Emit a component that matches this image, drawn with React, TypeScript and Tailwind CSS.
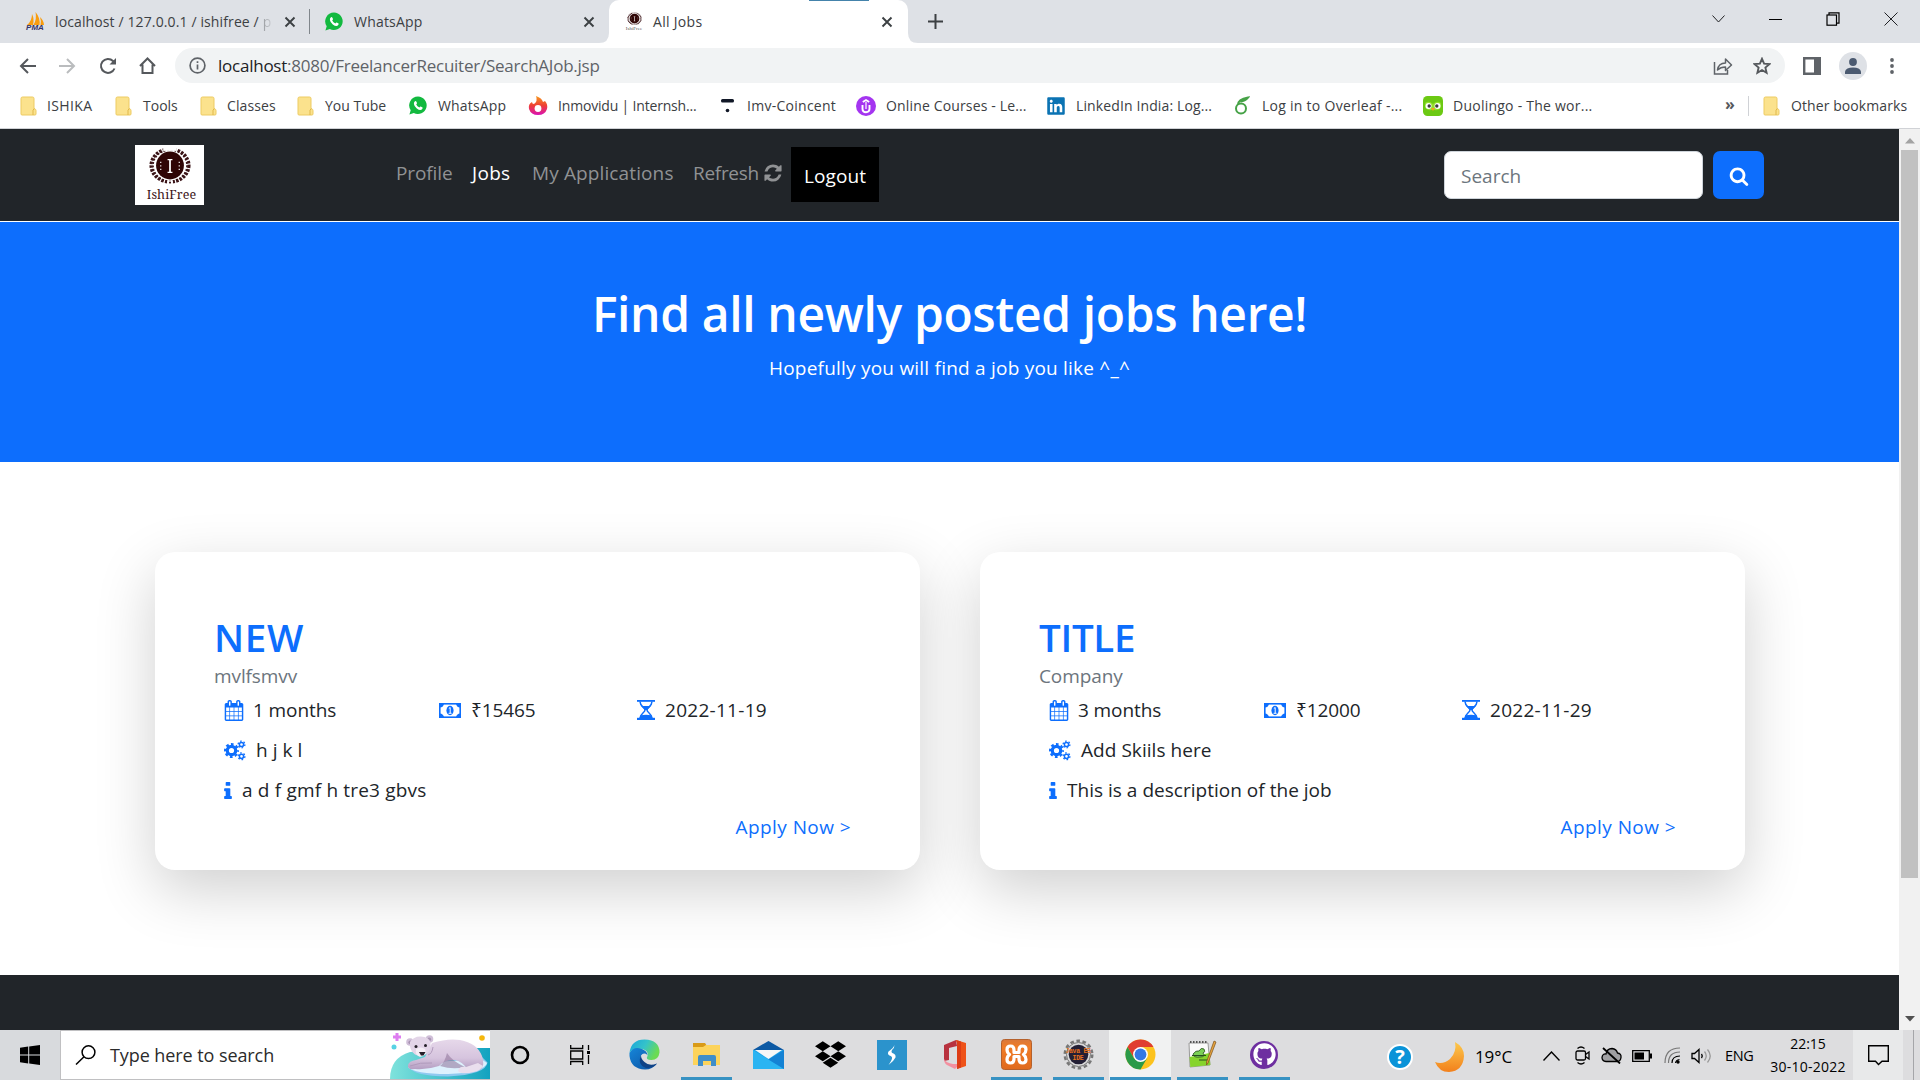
import React from "react";
import { FaWhatsapp, FaLinkedin, FaDropbox, FaGithub } from "react-icons/fa";

const CALENDAR =
  "M192 1664h288v-288h-288v288zm352 0h320v-288h-320v288zm-352-352h288v-320h-288v320zm352 0h320v-320h-320v320zm-352-384h288v-288h-288v288zm736 736h320v-288h-320v288zm-384-736h320v-288h-320v288zm768 736h288v-288h-288v288zm-384-352h320v-320h-320v320zm-352-864v-288q0-13-9.5-22.5t-22.5-9.5h-64q-13 0-22.5 9.5t-9.5 22.5v288q0 13 9.5 22.5t22.5 9.5h64q13 0 22.5-9.5t9.5-22.5zm736 864h288v-320h-288v320zm-384-384h320v-288h-320v288zm384 0h288v-288h-288v288zm32-480v-288q0-13-9.5-22.5t-22.5-9.5h-64q-13 0-22.5 9.5t-9.5 22.5v288q0 13 9.5 22.5t22.5 9.5h64q13 0 22.5-9.5t9.5-22.5zm384-64v1280q0 52-38 90t-90 38h-1408q-52 0-90-38t-38-90v-1280q0-52 38-90t90-38h128v-96q0-66 47-113t113-47h64q66 0 113 47t47 113v96h384v-96q0-66 47-113t113-47h64q66 0 113 47t47 113v96h128q52 0 90 38t38 90z";
const REFRESH =
  "M1639 1056q0 5-1 7-64 268-268 434.5t-478 166.5q-146 0-282.5-55t-243.5-157l-129 129q-19 19-45 19t-45-19-19-45v-448q0-26 19-45t45-19h448q26 0 45 19t19 45-19 45l-137 137q71 66 161 102t187 36q134 0 250-65t186-179q11-17 53-117 8-23 30-23h192q13 0 22.5 9.5t9.5 22.5zm25-800v448q0 26-19 45t-45 19h-448q-26 0-45-19t-19-45 19-45l138-138q-148-137-349-137-134 0-250 65t-186 179q-11 17-53 117-8 23-30 23h-199q-13 0-22.5-9.5t-9.5-22.5v-7q65-268 270-434.5t480-166.5q146 0 284 55.5t245 156.5l130-129q19-19 45-19t45 19 19 45z";
const SEARCH =
  "M1216 832q0-185-131.5-316.5t-316.5-131.5-316.5 131.5-131.5 316.5 131.5 316.5 316.5 131.5 316.5-131.5 131.5-316.5zm512 832q0 52-38 90t-90 38q-54 0-90-38l-343-342q-179 124-399 124-143 0-273.5-55.5t-225-150-150-225-55.5-273.5 55.5-273.5 150-225 225-150 273.5-55.5 273.5 55.5 225 150 150 225 55.5 273.5q0 220-124 399l343 343q37 37 37 90z";
const INFO =
  "M1216 1344v128q0 26-19 45t-45 19h-512q-26 0-45-19t-19-45v-128q0-26 19-45t45-19h64v-384h-64q-26 0-45-19t-19-45v-128q0-26 19-45t45-19h384q26 0 45 19t19 45v576h64q26 0 45 19t19 45zm-128-1152v192q0 26-19 45t-45 19h-256q-26 0-45-19t-19-45v-192q0-26 19-45t45-19h256q26 0 45 19t19 45z";

const Folder = () => (
  <svg width="17" height="20" viewBox="0 0 17 20">
    <path d="M1 2.5Q1 1 2.5 1h10Q14 1 14 2.5V13h.6q1.4 0 1.4 1.5V18q0 1-1 1H2q-1 0-1-1z" fill="#fbe28d" stroke="#edcb62" strokeWidth="1" />
    <path d="M13 19v-5l1.5-1.5" stroke="#e0b84a" fill="none" />
  </svg>
);

const WhatsAppIcon = () => (
  <svg width="18" height="19" viewBox="0 0 18 19">
    <path d="M9 .5a8.800 8.800 0 1 1-4.200 16.600L.4 18.500l1.300-4.300A8.800 8.800 0 0 1 9 .5z" fill="#12b93f" />
    <path d="M6 5.200q.8-.6 1.300.3l.7 1.600q0 .6-.8 1.300 1 2 3.200 3 .8-1 1.300-.8l1.900 1q.3 1.400-1.200 2.200-2 .6-4.600-1.400T4.900 8q-.1-2 1.100-2.800z" fill="#fff" />
  </svg>
);

const Crest = ({ w, h }: { w: number; h: number }) => (
  <svg width={w} height={h} viewBox="0 0 44 38">
    <ellipse cx="22" cy="18" rx="19.500" ry="17" fill="none" stroke="#3b1417" strokeWidth="3.200" strokeDasharray="2.600 1.300" />
    <ellipse cx="22" cy="18" rx="17.500" ry="16" fill="none" stroke="#3b1417" strokeWidth="1.800" strokeDasharray="2 1.600" />
    <rect x="15" y="0" width="14" height="3" fill="#fff" />
    <rect x="19" y="33.200" width="6" height="4.800" fill="#fff" />
    <circle cx="22" cy="35.500" r="1.100" fill="#3b1417" />
    <ellipse cx="22" cy="18" rx="15" ry="14.800" fill="#fff" />
    <ellipse cx="22" cy="18" rx="14.300" ry="14.300" fill="#2f0505" />
    <path d="M19.500 12h5M19.500 25h5" stroke="#fff" strokeWidth="1.200" />
    <path d="M22 12v13" stroke="#fff" strokeWidth="1.800" />
    <path d="M12.500 14v9M31.500 14v9" stroke="#fff" strokeWidth="1.200" strokeDasharray="1.300 2.400" />
  </svg>
);

const TabClose = () => (
  <svg width="12" height="12" viewBox="0 0 12 12" stroke="#3c4043" strokeWidth="1.9">
    <path d="M1.5 1.5l9 9M10.5 1.5l-9 9" />
  </svg>
);

function TabStrip() {
  return (
    <div className="flex h-[43px] bg-[#dee1e6] text-[14px] text-[#3c4043]">
      <div className="flex w-[309px] items-center pl-[25px]">
        <div className="flex w-[20px] flex-col items-center">
          <svg width="17" height="13" viewBox="0 0 17 13" fill="#f89c0e">
            <path d="M0 13Q5 9 5 2q2.500 5 1 11zM6.500 13Q10 7 8.500 0q5 6 4 13zM13.500 13q1-4-.5-8 3.500 3 4 8z" />
          </svg>
          <span className="font-['Liberation_Sans'] text-[8px] font-bold italic leading-[6px] text-[#333366]">PMA</span>
        </div>
        <span className="ml-[10px] w-[219px] whitespace-nowrap tracking-[0.12px]">
          localhost / 127.0.0.1 / ishifree / <span className="bg-gradient-to-r from-[#9a9da1] to-[#c8cbd0] bg-clip-text text-transparent">p</span>
        </span>
        <span className="ml-[10px]"><TabClose /></span>
      </div>
      <div className="flex w-[300px] items-center">
        <div className="h-[25px] w-px bg-[#80868b]" />
        <span className="ml-[15px]"><WhatsAppIcon /></span>
        <span className="ml-[11px] w-[229px] tracking-[0.2px]">WhatsApp</span>
        <TabClose />
      </div>
      <div className="relative flex w-[299px] items-center rounded-t-[10px] bg-white pl-[17px]">
        <div className="absolute left-[200px] top-0 h-px w-[60px] bg-[#4483ab]" />
        <svg className="absolute -left-[10px] bottom-0" width="10" height="10" viewBox="0 0 10 10"><path d="M10 0v10H0Q10 10 10 0z" fill="#fff" /></svg>
        <svg className="absolute -right-[10px] bottom-0" width="10" height="10" viewBox="0 0 10 10"><path d="M0 0v10h10Q0 10 0 0z" fill="#fff" /></svg>
        <div className="flex w-[16px] flex-col items-center">
          <Crest w={15} h={14} />
          <span className="font-['Liberation_Serif'] text-[5px] leading-[6px] text-[#555]">IshiFree</span>
        </div>
        <span className="ml-[11px] w-[228px] tracking-[0.3px]">All Jobs</span>
        <TabClose />
      </div>
      <div className="flex flex-1 items-center pl-[20px]">
        <svg width="15" height="15" viewBox="0 0 15 15" stroke="#3c4043" strokeWidth="2"><path d="M7.500 0v15M0 7.500h15" /></svg>
      </div>
      <div className="flex h-[38px] w-[230px] items-center gap-[44px]">
        <svg className="ml-[22px]" width="13" height="8" viewBox="0 0 13 8" fill="none" stroke="#202124"><path d="M.5.5l6 6.500 6-6.500" /></svg>
        <svg width="13" height="1" viewBox="0 0 13 1"><path d="M0 .5h13" stroke="#000" /></svg>
        <svg width="14" height="14" viewBox="0 0 14 14" fill="none" stroke="#000" strokeWidth="1.200"><rect x="1" y="3" width="9.500" height="10.200" /><path d="M3 3V.8h10v10.400h-2.500" /></svg>
        <svg width="14" height="14" viewBox="0 0 14 14" stroke="#202124"><path d="M.5.5l13 13M13.500.5l-13 13" /></svg>
      </div>
    </div>
  );
}

function Toolbar() {
  return (
    <div className="flex h-[45px] items-center bg-white">
      <div className="flex w-[175px] items-center gap-[23px] pl-[19px]">
        <svg width="17" height="16" viewBox="0 0 17 16" fill="none" stroke="#55585c" strokeWidth="2"><path d="M17 8H2M9 1L2 8l7 7" /></svg>
        <svg width="17" height="16" viewBox="0 0 17 16" fill="none" stroke="#babcbe" strokeWidth="2"><path d="M0 8h15M8 1l7 7-7 7" /></svg>
        <svg width="18" height="18" viewBox="0 0 18 18" fill="none" stroke="#55585c" strokeWidth="2"><path d="M15.500 11.500A7 7 0 1 1 14 4l1.500 1.500" /><path d="M17 1v6.500h-6.500z" fill="#55585c" stroke="none" /></svg>
        <svg className="-ml-px" width="17" height="18" viewBox="0 0 17 18" fill="none" stroke="#55585c" strokeWidth="2"><path d="M1 9l7.500-7.500L16 9M3.500 7.500V16h10V7.500" /></svg>
      </div>
      <div className="flex h-[35px] w-[1610px] items-center rounded-full bg-[#f1f3f4] pl-[14px]">
        <svg width="17" height="17" viewBox="0 0 17 17" fill="none" stroke="#5f6368" strokeWidth="1.700"><circle cx="8.500" cy="8.500" r="7.400" /><path d="M8.500 7.500v5M8.500 4.200v1.800" /></svg>
        <span className="ml-[12px] flex-1 whitespace-nowrap text-[17px] tracking-[-0.24px] text-[#5f6368]">
          <span className="text-[#202124]">localhost</span>:8080/FreelancerRecuiter/SearchAJob.jsp
        </span>
        <svg className="mr-[20px]" width="20" height="18" viewBox="0 0 20 18" fill="none" stroke="#5f6368" strokeWidth="1.500"><path d="M1.500 5v12h13v-4" /><path d="M4.500 13q1-7 8-7V2l6 6-6 5.500V10q-5 0-8 3z" strokeLinejoin="round" /></svg>
        <svg className="mr-[14px]" width="18" height="18" viewBox="0 0 18 18" fill="none" stroke="#55585c" strokeWidth="1.900"><path d="M9 1.800l2.100 4.900 5.300.4-4 3.500 1.200 5.200L9 13l-4.600 2.800 1.200-5.200-4-3.500 5.300-.4z" /></svg>
      </div>
      <div className="flex flex-1 items-center pl-[18px]">
        <svg width="18" height="18" viewBox="0 0 18 18"><path d="M1.200 1.200h15.600v15.600H1.200z" fill="#fff" stroke="#5f6368" strokeWidth="2.400" /><path d="M11 0h7v18h-7z" fill="#5f6368" /></svg>
        <div className="ml-[18px] flex size-[28px] items-center justify-center rounded-full bg-[#dee1e6]">
          <svg width="16" height="16" viewBox="0 0 16 16" fill="#4b5a70"><circle cx="8" cy="4" r="3.900" /><path d="M0 16v-2.500Q1 9.500 8 9.500t8 4V16z" /></svg>
        </div>
        <svg className="ml-[23px]" width="4" height="16" viewBox="0 0 4 16" fill="#5f6368"><circle cx="2" cy="2" r="1.900" /><circle cx="2" cy="8" r="1.900" /><circle cx="2" cy="14" r="1.900" /></svg>
      </div>
    </div>
  );
}

const bookmarks: { label: string; icon: React.ReactNode; slot: string; gap: string; text: string }[] = [
  { label: "ISHIKA", icon: <Folder />, slot: "w-[95px]", gap: "w-[27px]", text: "tracking-[0.35px]" },
  { label: "Tools", icon: <Folder />, slot: "w-[85px]", gap: "w-[28px]", text: "" },
  { label: "Classes", icon: <Folder />, slot: "w-[97px]", gap: "w-[27px]", text: "tracking-[0.1px]" },
  { label: "You Tube", icon: <Folder />, slot: "w-[112px]", gap: "w-[28px]", text: "" },
  { label: "WhatsApp", icon: <WhatsAppIcon />, slot: "w-[119px]", gap: "w-[29px]", text: "tracking-[0.15px]" },
  {
    label: "Inmovidu | Internsh...",
    icon: (
      <svg width="20" height="19" viewBox="0 0 20 19">
        <defs><linearGradient id="flame" x1="0" y1="0" x2="0" y2="1"><stop stopColor="#f79a1d" /><stop offset=".5" stopColor="#ee3f35" /><stop offset="1" stopColor="#d912b4" /></linearGradient></defs>
        <path d="M8 0q6 2 7 6l2-1q3 3 2 8-2 6-9 6T1 13Q0 8 4 6q0 2 2 2 4-3 2-8z" fill="url(#flame)" />
        <circle cx="10" cy="12.500" r="3.400" fill="#fff" />
      </svg>
    ),
    slot: "w-[193px]", gap: "w-[30px]", text: "tracking-[-0.18px]",
  },
  {
    label: "Imv-Coincent",
    icon: <svg width="13" height="15" viewBox="0 0 13 15" fill="#111827"><rect y="1" width="13" height="3.500" rx="1.500" /><circle cx="6.500" cy="12.500" r="1.800" /></svg>,
    slot: "w-[135px]", gap: "w-[26px]", text: "tracking-[0.27px]",
  },
  {
    label: "Online Courses - Le...",
    icon: <svg width="20" height="20" viewBox="0 0 20 20" fill="none"><circle cx="10" cy="10" r="10" fill="#a435f0" /><path d="M6.500 9v4q0 3.200 3.500 3.200t3.500-3.200V9M6.800 6L10 4l3.200 2" stroke="#fff" strokeWidth="1.900" /><path d="M10 6v7" stroke="#fff" strokeWidth="1.200" /></svg>,
    slot: "w-[191px]", gap: "w-[30px]", text: "tracking-[0.15px]",
  },
  { label: "LinkedIn India: Log...", icon: <FaLinkedin size={20} color="#0b73b3" className="-ml-px" />, slot: "w-[187px]", gap: "w-[29px]", text: "tracking-[0.12px]" },
  {
    label: "Log in to Overleaf -...",
    icon: <svg width="16" height="19" viewBox="0 0 16 19" fill="none" stroke="#46a247" strokeWidth="2"><circle cx="7" cy="12.500" r="5" /><path d="M4 9Q4 3 14 1.500 11 5 6.500 5.500" /></svg>,
    slot: "w-[189px]", gap: "w-[28px]", text: "tracking-[0.27px]",
  },
  {
    label: "Duolingo - The wor...",
    icon: (
      <svg width="20" height="20" viewBox="0 0 20 20">
        <rect width="20" height="20" rx="4.500" fill="#6cc913" />
        <path d="M2 7q4-3 8 1 4-4 8-1l-.5 5q-4 4-7.500 1-3.500 3-7.500-1z" fill="#94e02d" />
        <circle cx="5.500" cy="10" r="3" fill="#fff" /><circle cx="14.500" cy="10" r="3" fill="#fff" />
        <circle cx="6.200" cy="10" r="1.700" fill="#3c3c3c" /><circle cx="13.800" cy="10" r="1.700" fill="#3c3c3c" />
        <path d="M8 12h4l-2 3z" fill="#f9a01b" />
      </svg>
    ),
    slot: "w-[302px]", gap: "w-[30px]", text: "tracking-[0.24px]",
  },
];

function Bookmarks() {
  return (
    <div className="flex h-[41px] items-center whitespace-nowrap border-b border-[#d0d2d6] bg-white pb-[5px] pl-[20px] text-[14px] text-[#3c4043]">
      {bookmarks.map((b) => (
        <div key={b.label} className={`flex shrink-0 items-center ${b.slot}`}>
          <span className={`flex shrink-0 ${b.gap}`}>{b.icon}</span>
          <span className={b.text}>{b.label}</span>
        </div>
      ))}
      <span className="w-[23px] pb-[3px] text-[16px] font-bold text-[#55585c]">»</span>
      <span className="h-[20px] w-px bg-[#d0d2d6]" />
      <span className="ml-[14px] flex w-[28px]"><Folder /></span>
      <span className="tracking-[0.08px]">Other bookmarks</span>
    </div>
  );
}

function Navbar() {
  return (
    <div className="flex h-[93px] border-b border-white bg-[#212529] pl-[135px] text-[19px] text-[#909294]">
      <div className="mt-[16px] flex h-[60px] w-[69px] flex-col items-center overflow-hidden bg-white pt-[3px]">
        <Crest w={44} h={39} />
        <span className="pl-[4px] font-['Noto_Serif','DejaVu_Serif','Liberation_Serif',serif] text-[12.500px] leading-[20px] tracking-[0.1px] text-[#3b1417]">IshiFree</span>
      </div>
      <div className="ml-[192px] mt-[18px] flex h-[55px] w-[1048px] whitespace-nowrap leading-[52px]">
        <span className="w-[76px] tracking-[-0.1px]">Profile</span>
        <span className="w-[60px] text-white tracking-[0.3px]">Jobs</span>
        <span className="w-[161px] tracking-[0.12px]">My Applications</span>
        <span className="w-[70px] tracking-[-0.3px]">Refresh</span>
        <svg className="mt-[16px]" width="20" height="20" viewBox="0 0 1792 1792" fill="#909294"><path d={REFRESH} /></svg>
        <span className="ml-[8px] w-[88px] bg-black text-center leading-[59px] text-white tracking-[0.1px]">Logout</span>
      </div>
      <div className="mt-[22px] flex h-[48px] items-stretch gap-[10px]">
        <div className="flex w-[259px] items-center rounded-[7px] border border-[#ced4da] bg-white pl-[16px] pt-[2px] text-[#6c757d]">Search</div>
        <div className="flex w-[51px] items-center justify-center rounded-[7px] bg-[#0d6efd] pt-[2px]">
          <svg width="20" height="20" viewBox="0 0 1792 1792" fill="#fff"><path d={SEARCH} /></svg>
        </div>
      </div>
    </div>
  );
}

const Money = () => (
  <svg width="22" height="15" viewBox="0 0 22 15">
    <rect x=".8" y=".8" width="20.400" height="13.400" fill="#fff" stroke="#0d6efd" strokeWidth="1.600" />
    <path d="M1 1h4Q4 4.500 1 4.500zM21 1h-4q1 3.500 4 3.500zM1 14h4q-1-3.500-4-3.500zM21 14h-4q1-3.500 4-3.500z" fill="#0d6efd" />
    <ellipse cx="11" cy="7.500" rx="3.600" ry="4.700" fill="#0d6efd" />
    <path d="M9.800 5.500L11.200 4.500v5.500M9.600 10.300h3" stroke="#fff" strokeWidth="1" fill="none" />
  </svg>
);

const Hourglass = () => (
  <svg width="18" height="20" viewBox="0 0 18 20">
    <path d="M3 1.500c0 5 5 6 5 8.500s-5 3.500-5 8.500M15 1.500c0 5-5 6-5 8.500s5 3.500 5 8.500" fill="none" stroke="#0d6efd" strokeWidth="1.500" />
    <path d="M4 6h10L10 10H8zM3 15.500q6-1.500 12 0l.5 3h-13z" fill="#0d6efd" />
    <rect width="18" height="1.800" fill="#0d6efd" /><rect y="17.800" width="18" height="2.200" fill="#0d6efd" />
  </svg>
);

const Cogs = () => (
  <svg width="22" height="21" viewBox="0 0 22 21" fill="none" stroke="#0d6efd">
    <circle cx="7.500" cy="10.500" r="4.200" strokeWidth="3.200" />
    <circle cx="7.500" cy="10.500" r="6.400" strokeWidth="2.200" strokeDasharray="2.700 2.327" strokeDashoffset="1.350" />
    <circle cx="17.500" cy="4.500" r="2.100" strokeWidth="1.500" />
    <circle cx="17.500" cy="4.500" r="3.400" strokeWidth="1.300" strokeDasharray="1.600 1.960" />
    <circle cx="17.500" cy="16.300" r="2.100" strokeWidth="1.500" />
    <circle cx="17.500" cy="16.300" r="3.400" strokeWidth="1.300" strokeDasharray="1.600 1.960" />
  </svg>
);

type Job = { title: string; company: string; months: string; pay: string; date: string; skills: string; about: string; aboutStyle: string; titleStyle: string };

const jobs: Job[] = [
  { title: "NEW", company: "mvlfsmvv", months: "1 months", pay: "₹15465", date: "2022-11-19", skills: "h j k l", about: "a d f gmf h tre3 gbvs", aboutStyle: "tracking-[0.18px]", titleStyle: "tracking-[0.7px]" },
  { title: "TITLE", company: "Company", months: "3 months", pay: "₹12000", date: "2022-11-29", skills: "Add Skiils here", about: "This is a description of the job", aboutStyle: "tracking-[0.02px]", titleStyle: "tracking-[-0.3px]" },
];

function JobCard({ job }: { job: Job }) {
  return (
    <div className="h-[318px] w-[765px] rounded-[20px] bg-white px-[60px] pt-[60px] text-[19px] text-[#212529] shadow-[0_20px_60px_rgba(0,0,0,0.19)]">
      <div className={`-ml-px h-[48px] text-[38.500px] font-semibold leading-[50px] text-[#0d6efd] ${job.titleStyle}`}>{job.title}</div>
      <div className="-ml-px h-[30px] leading-[32px] tracking-[-0.1px] text-[#6c757d]">{job.company}</div>
      <div className="flex h-[40px] items-center pl-[9px]">
        <svg width="20" height="21" viewBox="0 0 1792 1792" preserveAspectRatio="none" fill="#0d6efd"><path d={CALENDAR} /></svg>
        <span className="ml-[9px] w-[186px] tracking-[-0.1px]">{job.months}</span>
        <Money />
        <span className="ml-[10px] w-[166px] tracking-[-0.1px]">{job.pay}</span>
        <Hourglass />
        <span className="ml-[10px] tracking-[0.28px]">{job.date}</span>
      </div>
      <div className="flex h-[40px] items-center pl-[9px]">
        <Cogs />
        <span className="ml-[10px] tracking-[0.05px]">{job.skills}</span>
      </div>
      <div className="flex h-[40px] items-center pl-[9px]">
        <svg width="8" height="17" viewBox="576 128 640 1408" fill="#0d6efd"><path d={INFO} /></svg>
        <span className={`ml-[10px] ${job.aboutStyle}`}>{job.about}</span>
      </div>
      <div className="pr-[9px] text-right leading-[34px] tracking-[0.42px] text-[#0d6efd]">Apply Now &gt;</div>
    </div>
  );
}

function Page() {
  return (
    <div className="flex h-[901px]">
      <div className="flex w-[1899px] flex-col bg-white">
        <Navbar />
        <div className="flex h-[240px] flex-col items-center bg-[#0d6efd] pt-[60px] text-white">
          <h1 className="h-[69px] whitespace-nowrap text-[48px] font-semibold leading-[64px] tracking-[-0.38px]">Find all newly posted jobs here!</h1>
          <p className="whitespace-nowrap text-[19px] leading-[34px] tracking-[0.22px]">Hopefully you will find a job you like ^_^</p>
        </div>
        <div className="flex h-[513px] gap-[60px] overflow-hidden pl-[155px] pt-[90px]">
          {jobs.map((j) => <JobCard key={j.title} job={j} />)}
        </div>
        <div className="flex-1 bg-[#212529]" />
      </div>
      <div className="flex w-[21px] flex-col items-center bg-[#f1f1f1]">
        <svg className="mt-[9px]" width="10" height="6" viewBox="0 0 10 6"><path d="M0 5.500L5 0l5 5.500z" fill="#a3a3a3" /></svg>
        <div className="mt-[6px] h-[728px] w-[17px] bg-[#c1c1c1]" />
        <svg className="mt-auto mb-[8px]" width="10" height="6" viewBox="0 0 10 6"><path d="M0 0h10L5 5.500z" fill="#505050" /></svg>
      </div>
    </div>
  );
}

const PolarBear = () => (
  <svg width="100" height="48" viewBox="0 0 100 48">
    <defs>
      <linearGradient id="sea" x1="0" x2="1"><stop stopColor="#7fe3dc" /><stop offset="1" stopColor="#12a2c0" /></linearGradient>
      <linearGradient id="fur" x1="0" y1="0" x2="0" y2="1"><stop stopColor="#e6d8ea" /><stop offset=".6" stopColor="#d6c4de" /><stop offset="1" stopColor="#b19abf" /></linearGradient>
    </defs>
    <path d="M0 48Q0 27 20 21L85 17h15v31z" fill="url(#sea)" />
    <path d="M18 35q4 10 40 10.500 38-2 39.500-14L92 26z" fill="#8fc9f0" />
    <path d="M18 36q6 7 40 7 36-1 39-11l-6-4-60 4z" fill="#ddf1fd" />
    <path d="M42 12q16-5 28-3 17 3 22 16 3 9-1 13-7 3-14 0-4-7-12-9-10-1-16 6-12 4-24 3-8 1-7-4 1-4 8-5l9-3z" fill="url(#fur)" />
    <path d="M50 35q5-4 7-13 5 8 18 14-12 3-25-1z" fill="#94799f" opacity=".6" />
    <path d="M68 40q1-5 8-4 6-2 12-4l5 3q-3 5-9 6-12 3-16-1z" fill="#eadfee" />
    <circle cx="20" cy="11" r="3.800" fill="#d0bfd8" /><circle cx="39.500" cy="8" r="3.800" fill="#d0bfd8" />
    <circle cx="20.300" cy="11.300" r="1.900" fill="#a993b4" /><circle cx="39.200" cy="8.300" r="1.900" fill="#a993b4" />
    <path d="M20 11q4-6 11-5.500 8 .5 9.500 6 .8 7-3.500 11-6 4-12 1-6-4-5-12.500z" fill="#e3d5e8" />
    <path d="M26 18q5-3 9 0l1 4.500q-3 4-7 3-4-2-3-7.500z" fill="#f5eef6" />
    <circle cx="26" cy="15.500" r="1.500" fill="#252029" /><circle cx="35.500" cy="14.500" r="1.500" fill="#252029" />
    <path d="M29 21h6.500l-2 3.500h-2.500z" fill="#252029" />
    <path d="M20 35q10-4 22-3M38 24q4-1 5-8" fill="none" stroke="#b09abc" strokeWidth="1" />
    <path d="M7 2v8M3 6h8" stroke="#dd7cf0" strokeWidth="3" />
    <circle cx="4" cy="16" r="2.500" fill="#58d2e4" /><circle cx="92" cy="7" r="2.800" fill="#f5b70c" />
  </svg>
);

const Edge = () => (
  <svg width="31" height="31" viewBox="0 0 31 31">
    <defs>
      <linearGradient id="e1" x1="0" y1="0" x2="1" y2=".4"><stop stopColor="#19a5dd" /><stop offset=".55" stopColor="#35c3c9" /><stop offset="1" stopColor="#6bdb53" /></linearGradient>
      <linearGradient id="e2" x1="0" y1="0" x2="1" y2="1"><stop stopColor="#1686d9" /><stop offset="1" stopColor="#0c50a0" /></linearGradient>
    </defs>
    <path d="M.5 14Q2 .5 15.500.5 30.500 1 30.500 13.500q-1 7.500-8 7.500-6.500 0-4-4 1.500-5-5-7Q4 9 .5 14z" fill="url(#e1)" />
    <path d="M.5 14Q5 6.500 13 10q5 2 5.500 6-4-3-6.500.5-2.500 8 7 10 5 1 9-2-4.500 6-12 6Q2 30 .5 17z" fill="url(#e2)" />
    <path d="M12 16.500q-4 9 5 12.500 7 .5 11-4.500-8 3-12.500-1.500-3.500-3-3.500-6.500z" fill="#0f4286" />
  </svg>
);

const Explorer = () => (
  <svg width="29" height="25" viewBox="0 0 29 25">
    <path d="M1 1h12l2 3-2 4H1z" fill="#d99a17" /><path d="M1 5h10l3-2h14v20H1z" fill="#fcd35b" />
    <path d="M6 24V15q0-2 2-2h14q2 0 2 2v9h-5v-5h-8v5z" fill="#3f8ec9" />
  </svg>
);

const Mail = () => (
  <svg width="31" height="30" viewBox="0 0 31 30">
    <path d="M0 10L15.500 1 31 10z" fill="#0c59a4" /><path d="M0 10h31v19H0z" fill="#1ba1e8" />
    <path d="M0 10l31 19H0z" fill="#2bb4f2" /><path d="M31 10v19L15.500 19.500z" fill="#1482d4" /><path d="M2 10h27L15.500 19z" fill="#f7f7f7" />
  </svg>
);

const Xampp = () => (
  <svg width="31" height="31" viewBox="0 0 31 31">
    <defs><linearGradient id="xg" x1="0" y1="0" x2="0" y2="1"><stop stopColor="#d9783a" /><stop offset=".25" stopColor="#f07c26" /><stop offset="1" stopColor="#e06a1d" /></linearGradient></defs>
    <rect x=".5" y=".5" width="30" height="30" rx="3" fill="url(#xg)" stroke="#b5612c" />
    <path
      d="M13 13.500V11q0-4-3.500-4T6 10.500q0 3 2.500 5Q6 17.500 6 20.500 6 24 9.500 24t3.500-4v-2.500h5V20q0 4 3.500 4t3.500-3.500q0-3-2.500-5 2.500-2 2.500-5Q25 7 21.500 7T18 11v2.500z"
      fill="none" stroke="#fff" strokeWidth="3.200" strokeLinejoin="round"
    />
  </svg>
);

const Chrome = () => (
  <svg width="31" height="31" viewBox="0 0 31 31">
    <circle cx="15.500" cy="15.500" r="15" fill="#fcc31e" />
    <path d="M2.500 8A15 15 0 0 1 28.500 8H15.500L9 19.300z" fill="#e03e30" />
    <path d="M2.500 8A15 15 0 0 0 15.500 30.500L22 19.300l-6.500 2L9 19.200z" fill="#2a9a48" />
    <circle cx="15.500" cy="15.500" r="7.400" fill="#fff" /><circle cx="15.500" cy="15.500" r="5.900" fill="#3478e5" />
  </svg>
);

const JavaIde = () => (
  <div className="relative flex size-[31px] items-center justify-center">
    <svg className="absolute inset-0" width="31" height="31" viewBox="0 0 31 31">
      <circle cx="15.500" cy="15.500" r="13.700" fill="none" stroke="#777" strokeWidth="2.600" strokeDasharray="3.600 2.600" />
      <circle cx="15.500" cy="15.500" r="12" fill="#d8d8d8" stroke="#777" /><circle cx="15.500" cy="15.500" r="9.800" fill="#231f35" />
    </svg>
    <span className="relative whitespace-nowrap text-center font-['Liberation_Mono'] text-[6.500px] font-bold leading-[7px] tracking-[-0.3px] text-[#e8711c]">Java EE<br />IDE</span>
  </div>
);

const Notepad = () => (
  <svg width="30" height="29" viewBox="0 0 30 29">
    <path d="M2 3h19l2 22-20 2z" fill="#fafafa" stroke="#9a9a9a" /><path d="M2.500 17l20-4 .8 12-20 2z" fill="#86d42c" />
    <path d="M3 2h18" stroke="#555" strokeWidth="2" strokeDasharray="1.500 1.500" />
    <path d="M6 14q3-4 6-3 2-4 5-2 2 3-1 4 3 4-3 4-6 1-7-3z" fill="#7bd055" stroke="#284f1f" strokeWidth=".8" />
    <path d="M5 15.500h14M12 20h10" stroke="#284f1f" /><path d="M27 1l2 1-8 21-1.500 2v-3z" fill="#e8a33c" stroke="#79501b" strokeWidth=".7" />
  </svg>
);

const apps: { name: string; icon: React.ReactNode; bar: string; slot: string }[] = [
  { name: "edge", icon: <Edge />, bar: "", slot: "" },
  { name: "explorer", icon: <Explorer />, bar: "w-[51px] bg-[#3792c3]", slot: "" },
  { name: "mail", icon: <Mail />, bar: "", slot: "" },
  { name: "dropbox", icon: <FaDropbox size={31} color="#000" />, bar: "", slot: "" },
  {
    name: "stream",
    icon: <svg width="30" height="30" viewBox="0 0 30 30"><rect width="30" height="30" fill="#2b93cc" /><path d="M17.500 5q-1 3-6 6.500-1.500 2.500 1 4 3 1 2.500 3-.5 2-3.500 6.500 5-3.500 7-7.500.5-3-2-4-3-1-1.500-3.500 2.500-2 2.500-5z" fill="#fff" /></svg>,
    bar: "", slot: "",
  },
  {
    name: "office",
    icon: <svg width="23" height="29" viewBox="0 0 23 29"><path d="M13 0L1 5v16l5-1V8l8-2z" fill="#b8323f" /><path d="M1 19q2 4 9 5h4v3l-2 2-8-4q-3-2-3-6z" fill="#f390a0" /><path d="M13 0l10 3v23l-9 3V3z" fill="#ee5219" /><path d="M13 0l5 1.500v26L14 29V3z" fill="#dd3d16" /></svg>,
    bar: "", slot: "",
  },
  { name: "xampp", icon: <Xampp />, bar: "w-[51px] bg-[#3792c3]", slot: "" },
  { name: "java", icon: <JavaIde />, bar: "w-[51px] bg-[#3792c3]", slot: "" },
  { name: "chrome", icon: <Chrome />, bar: "w-[61px] bg-[#3792c3]", slot: "bg-[#f1f2f2]" },
  { name: "notepad", icon: <Notepad />, bar: "w-[51px] bg-[#3792c3]", slot: "" },
  { name: "github", icon: <span className="flex size-[28px] items-center justify-center rounded-full bg-[#6e2fa0]"><FaGithub size={23} color="#fff" /></span>, bar: "w-[51px] bg-[#3792c3]", slot: "" },
];

function Taskbar() {
  return (
    <div className="flex h-[50px] items-stretch bg-[#dddddf] text-black">
      <div className="flex w-[60px] items-center justify-center bg-[#d8dadd]">
        <svg width="20" height="20" viewBox="0 0 20 20"><path d="M0 2.700L8.200 1.500v8H0zM9.200 1.400L20 0v9.500H9.200zM0 10.500h8.200v8L0 17.300zM9.200 10.500H20V20L9.200 18.600z" /></svg>
      </div>
      <div className="flex w-[430px] items-center border-y border-l border-[#c0c0c2] bg-white pl-[14px]">
        <svg width="21" height="20" viewBox="0 0 21 20" fill="none" stroke="#000" strokeWidth="1.500"><circle cx="13.500" cy="7.200" r="6.400" /><path d="M9 11.700L1 19.500" /></svg>
        <span className="ml-[14px] w-[280px] whitespace-nowrap text-[18px] tracking-[-0.08px] text-[#2b2b2b]">Type here to search</span>
        <PolarBear />
      </div>
      <div className="flex w-[60px] items-center justify-center bg-[#dbdcde]">
        <svg width="20" height="20" viewBox="0 0 20 20"><circle cx="10" cy="10" r="8" fill="none" stroke="#000" strokeWidth="2.600" /></svg>
      </div>
      <div className="flex w-[63px] items-center pl-[20px]">
        <svg width="21" height="20" viewBox="0 0 21 20" fill="none" stroke="#000" strokeWidth="1.300"><path d="M.7 0v3.500h12V0M.7 20v-3.500h12V20M.7 6h12v8H.7zM18.500 0v5M18.500 10v9" /><path d="M17 6h3v3h-3z" fill="#000" stroke="none" /></svg>
      </div>
      {apps.map((a) => (
        <div key={a.name} className={`flex w-[62px] flex-col items-center ${a.slot}`}>
          <div className="flex h-[47px] items-center pt-[2px]">{a.icon}</div>
          <div className={`h-[3px] ${a.bar}`} />
        </div>
      ))}
      <div className="flex w-[235px] items-center pl-[92px] pt-[3px]">
        <div className="flex size-[26px] shrink-0 items-center justify-center rounded-full border-2 border-white bg-[#0a93d8] text-[20px] font-bold leading-none text-white">?</div>
        <svg className="ml-[22px] shrink-0" width="29" height="30" viewBox="0 0 29 30">
          <defs><linearGradient id="moon" x1="0" y1="0" x2="0" y2="1"><stop stopColor="#fdc94c" /><stop offset="1" stopColor="#f2801c" /></linearGradient></defs>
          <path d="M20 0q9 5 9 14-1 15-15 16-10 0-14-10 8 3 15-3 7-7 5-17z" fill="url(#moon)" />
        </svg>
        <span className="ml-[11px] whitespace-nowrap text-[17px] tracking-[-0.1px]">19°C</span>
      </div>
      <div className="flex w-[239px] items-center pt-[1px]">
        <svg className="ml-[13px]" width="17" height="10" viewBox="0 0 17 10" fill="none" stroke="#000" strokeWidth="1.400"><path d="M.5 9.500l8-8.500 8 8.500" /></svg>
        <svg className="ml-[15px]" width="15" height="19" viewBox="0 0 15 19" fill="none" stroke="#000" strokeWidth="1.300"><rect x="1" y="5" width="9.500" height="9" rx="1.500" /><path d="M10.500 8.500L14 6v7l-3.500-2.500M2.500 2.500q3.500-3 7 0M2.500 16.500q3.500 3 7 0" /></svg>
        <svg className="ml-[11px]" width="21" height="17" viewBox="0 0 21 17" stroke="#000" strokeWidth="1.300"><path d="M5 14.500q-4-.5-4-4 .5-4 4-3.500Q6 1.500 11 1.500q4.500.5 5.500 4.500 4 .5 3.500 4.500-.5 4-4 4z" fill="#a0a0a3" /><path d="M2 1l17 15.500" fill="none" strokeWidth="1.800" /></svg>
        <svg className="ml-[10px]" width="20" height="12" viewBox="0 0 20 12"><path d="M.7.700h16.600v10.600H.7z" fill="none" stroke="#000" strokeWidth="1.300" /><path d="M2.500 2.500H12v7H2.500zM18 3.500h2v5h-2z" /></svg>
        <svg className="ml-[12px]" width="17" height="17" viewBox="0 0 17 17" fill="none" stroke="#777" strokeWidth="1.200"><path d="M1 16Q1 1 16 1M4.500 16q0-11 11.500-11" /><path d="M8 16q0-7 8-7M11.500 16q.5-3 4-3.500" stroke="#000" /><circle cx="14" cy="15" r="1.700" fill="#000" stroke="none" /></svg>
        <svg className="ml-[10px]" width="21" height="16" viewBox="0 0 21 16" fill="none" stroke="#000" strokeWidth="1.300"><path d="M1 5.500h2.500L8 1.500v13l-4.500-4H1z" /><path d="M10.500 6q1.500 2 0 4" /><path d="M13.500 3.500q3.500 4.500 0 9M16.500 1.500q5.500 6.500 0 13" stroke="#999" /></svg>
        <span className="ml-[13px] text-[14.500px] tracking-[-0.3px]">ENG</span>
      </div>
      <div className="flex w-[84px] flex-col items-center justify-center pr-[6px] text-[14px] leading-[23px]">
        <span>22:15</span>
        <span className="tracking-[0.25px]">30-10-2022</span>
      </div>
      <div className="flex w-[50px] items-center justify-center bg-[#e8e9ea]">
        <svg width="21" height="21" viewBox="0 0 21 21" fill="none" stroke="#000" strokeWidth="1.400"><path d="M.7.700h19.600v15.500H14L10.500 19.500 7.500 16.200H.7z" /></svg>
      </div>
      <div className="w-[10px]" />
      <div className="w-px bg-[#a5a6a9]" />
    </div>
  );
}

export default function App() {
  return (
    <div className="flex h-[1080px] w-[1920px] flex-col overflow-hidden font-['Open_Sans','Noto_Sans',sans-serif]">
      <TabStrip />
      <Toolbar />
      <Bookmarks />
      <Page />
      <Taskbar />
    </div>
  );
}
